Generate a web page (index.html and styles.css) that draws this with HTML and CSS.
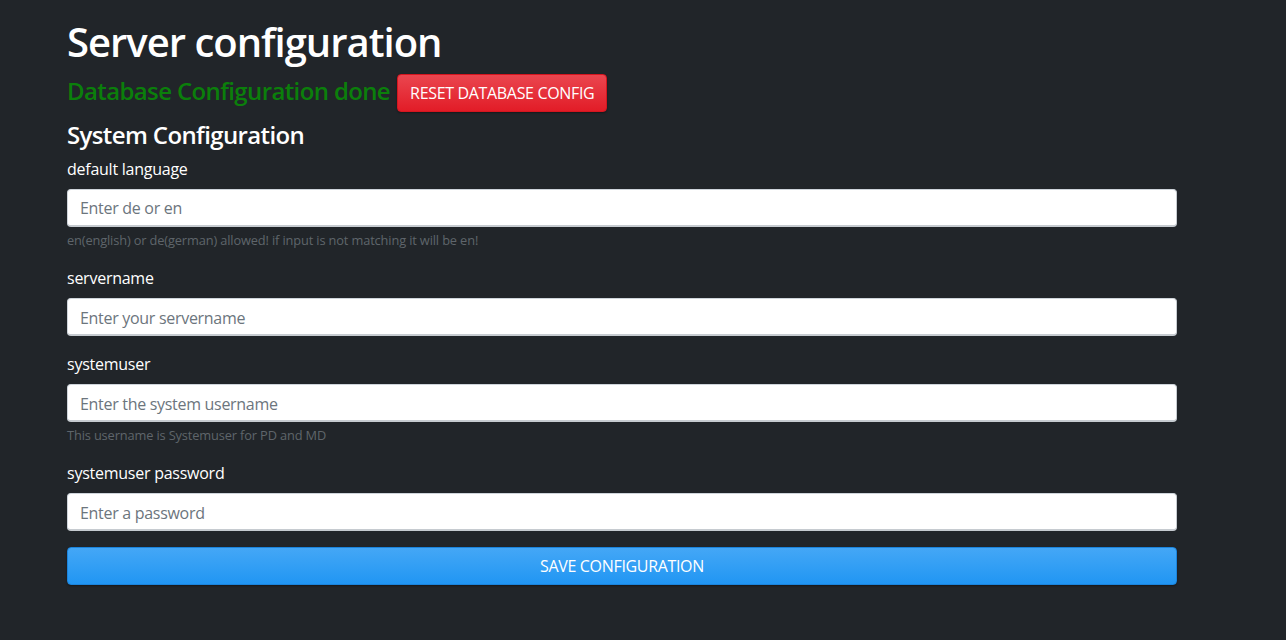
FILE: index.html
```html
<!DOCTYPE html>
<html lang="en">
<head>
<meta charset="utf-8">
<title>Server configuration</title>
<link rel="stylesheet" href="styles.css">
</head>
<body>
<main class="page">
  <h1 class="title">Server configuration</h1>
  <div class="status-row">
    <h3 class="status">Database Configuration done</h3>
    <button class="btn btn-danger" type="button">Reset database config</button>
  </div>
  <h4 class="section">System Configuration</h4>
  <form class="form">
    <div class="group">
      <label class="label" for="lang">default language</label>
      <input class="input" id="lang" type="text" placeholder="Enter de or en">
      <small class="help">en(english) or de(german) allowed! if input is not matching it will be en!</small>
    </div>
    <div class="group">
      <label class="label" for="server">servername</label>
      <input class="input" id="server" type="text" placeholder="Enter your servername">
    </div>
    <div class="group">
      <label class="label" for="user">systemuser</label>
      <input class="input" id="user" type="text" placeholder="Enter the system username">
      <small class="help">This username is Systemuser for PD and MD</small>
    </div>
    <div class="group">
      <label class="label" for="pw">systemuser password</label>
      <input class="input" id="pw" type="password" placeholder="Enter a password">
    </div>
    <button class="btn btn-primary btn-block" type="button">Save configuration</button>
  </form>
</main>
</body>
</html>
```

FILE: styles.css
```css
html, body {
  margin: 0;
  padding: 0;
}
body {
  background: #212529;
  color: #ffffff;
  font-family: "Open Sans", "Noto Sans", "Liberation Sans", sans-serif;
  font-size: 16px;
  line-height: 1.5;
  height: 640px;
  overflow: hidden;
}
.page {
  width: 1110px;
  margin-left: 67px;
  padding-top: 18px;
}
.title {
  margin: 0 0 8px;
  font-size: 40px;
  line-height: 48px;
  font-weight: 600;
  letter-spacing: -1px;
}
.status-row {
  display: flex;
  align-items: center;
  gap: 7px;
  margin-bottom: 8px;
}
.status {
  margin: 0;
  font-size: 24px;
  line-height: 28.8px;
  font-weight: 600;
  letter-spacing: -0.62px;
  color: #0b7f0b;
  position: relative;
  top: -2px;
}
.section {
  margin: 0 0 8px;
  font-size: 24px;
  line-height: 28.8px;
  font-weight: 600;
  letter-spacing: -0.62px;
  position: relative;
  top: 1px;
}
.form {
  display: flex;
  flex-direction: column;
}
.group {
  display: flex;
  flex-direction: column;
  margin-bottom: 16px;
}
.label {
  margin-bottom: 8px;
  line-height: 24px;
  letter-spacing: -0.25px;
}
.input {
  box-sizing: border-box;
  height: 38px;
  padding: 7px 12px 5px;
  font: inherit;
  letter-spacing: -0.3px;
  color: #495057;
  background: #ffffff;
  border: 1px solid #ced4da;
  border-bottom: 2px solid #c6cbd0;
  border-right-color: #c6cbd0;
  border-radius: 4px;
  outline: none;
}
.input::placeholder {
  color: #6c757d;
}
.help {
  margin-top: 4px;
  font-size: 12.8px;
  line-height: 19.2px;
  letter-spacing: -0.13px;
  color: #5f656b;
}
.btn {
  box-sizing: border-box;
  height: 38px;
  padding: 0 12px;
  font: inherit;
  letter-spacing: -0.33px;
  white-space: nowrap;
  text-transform: uppercase;
  color: #ffffff;
  border-radius: 4px;
  cursor: pointer;
}
.btn-danger {
  width: 210px;
  background: linear-gradient(#ea464f, #e21c27);
  border: 1px solid #d5161f;
  box-shadow: 0 1px 2px rgba(0, 0, 0, 0.35);
}
.btn-primary {
  background: linear-gradient(#44a7f6, #2196f3);
  border: 1px solid #1b84dc;
  box-shadow: 0 1px 2px rgba(0, 0, 0, 0.35);
}
.btn-block {
  width: 100%;
}
```
